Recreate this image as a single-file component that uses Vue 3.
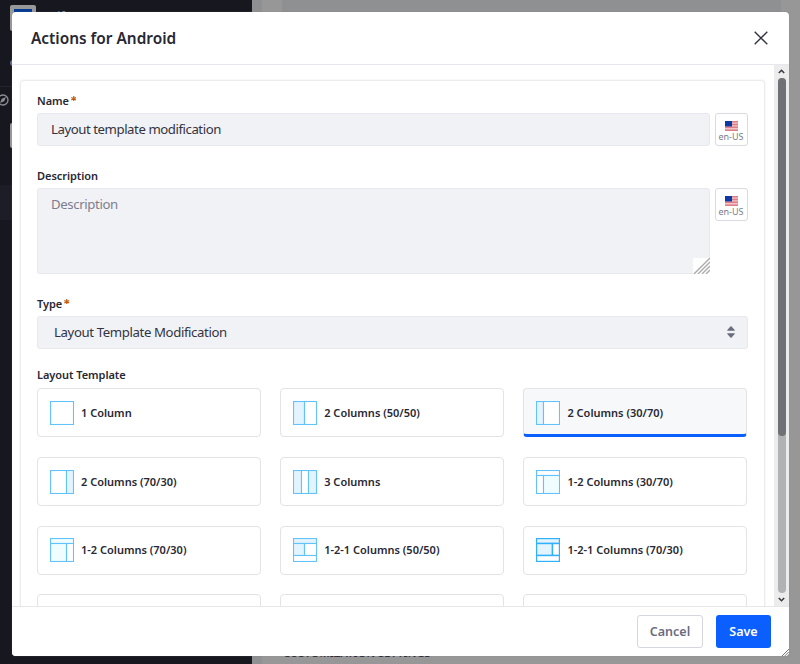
<script setup>
const B = '#e3f4ff'
const M = '#effdff'
const W = '#fff'
// Each icon is a list of panes: [x, y, width, height, fill]
const templates = [
  { name: '1 Column', panes: [[0, 0, 23, 23, W]] },
  { name: '2 Columns (50/50)', panes: [[0, 0, 11, 23, B], [11, 0, 12, 23, W]] },
  { name: '2 Columns (30/70)', active: true, panes: [[0, 0, 7, 23, B], [7, 0, 16, 23, W]] },
  { name: '2 Columns (70/30)', panes: [[0, 0, 16, 23, W], [16, 0, 7, 23, B]] },
  { name: '3 Columns', panes: [[0, 0, 8, 23, B], [8, 0, 7, 23, W], [15, 0, 8, 23, B]] },
  { name: '1-2 Columns (30/70)', panes: [[0, 0, 23, 5, W], [0, 5, 7, 18, W], [7, 5, 16, 18, M]] },
  { name: '1-2 Columns (70/30)', panes: [[0, 0, 23, 5, M], [0, 5, 16, 18, M], [16, 5, 7, 18, W]] },
  { name: '1-2-1 Columns (50/50)', panes: [[0, 0, 23, 5, B], [0, 5, 11, 12, B], [11, 5, 12, 12, W], [0, 17, 23, 6, W]] },
  { name: '1-2-1 Columns (70/30)', strong: true, panes: [[0, 0, 23, 5, B], [0, 5, 16, 12, B], [16, 5, 7, 12, W], [0, 17, 23, 6, W]] },
  { name: '', panes: [] },
  { name: '', panes: [] },
  { name: '', panes: [] }
]
</script>

<template>
  <div class="page">
    <div class="sidebar">
      <div class="logo"><i></i></div>
      <div class="site">Liferay</div>
      <div class="dot"></div>
      <div class="rule"></div>
      <svg class="compass" viewBox="0 0 12 12"><circle cx="6" cy="6" r="5" fill="none" stroke="#8f8f93" stroke-width="1.3" /><path d="M9 3 7.2 7.2 3 9 4.8 4.8Z" fill="#8f8f93" /></svg>
      <div class="tab"></div>
      <div class="item"></div>
    </div>
    <div class="strip"></div>
    <div class="gutter"></div>
    <div class="sheet"><span>CUSTOMIZATION SETTINGS</span></div>
    <div class="edge"></div>

    <section class="modal">
      <header>
        <h1>Actions for Android</h1>
        <svg class="close" viewBox="0 0 14 14"><path d="M.7.7 13.3 13.3M13.3.7.7 13.3" stroke="#33343f" stroke-width="1.4" fill="none" /></svg>
      </header>
      <div class="body">
        <div class="scroll">
          <div class="panel">
            <label class="l-name">Name<svg class="req" viewBox="0 0 6 6"><path d="M3 0V6M.3 1.6 5.7 4.4M5.7 1.6.3 4.4" stroke="#c45a14" stroke-width="1.3" /></svg></label>
            <div class="row">
              <div class="control name">Layout template modification</div>
              <div class="locale"><svg viewBox="0 0 13 10"><path fill="#f3c3c5" d="M0 0h13v10H0z" /><path d="M0 .7h13M0 3.5h13M0 6.3h13M0 9.2h13" stroke="#dc7f86" stroke-width="1.4" /><path fill="#0b3aa5" d="M0 0h7v5.6H0z" /></svg><span>en-US</span></div>
            </div>
            <label class="l-desc">Description</label>
            <div class="row">
              <div class="control area"><span>Description</span>
                <svg class="grip" viewBox="0 0 17 16"><path fill="#fff" d="M0 0h17v16H0z" /><path d="M1 16 17 0M5 16 17 4M9 16 17 8M13 16 17 12" stroke="#aaa" stroke-width="1.4" /></svg>
              </div>
              <div class="locale"><svg viewBox="0 0 13 10"><path fill="#f3c3c5" d="M0 0h13v10H0z" /><path d="M0 .7h13M0 3.5h13M0 6.3h13M0 9.2h13" stroke="#dc7f86" stroke-width="1.4" /><path fill="#0b3aa5" d="M0 0h7v5.6H0z" /></svg><span>en-US</span></div>
            </div>
            <label class="l-type">Type<svg class="req" viewBox="0 0 6 6"><path d="M3 0V6M.3 1.6 5.7 4.4M5.7 1.6.3 4.4" stroke="#c45a14" stroke-width="1.3" /></svg></label>
            <div class="control select"><span>Layout Template Modification</span>
              <svg viewBox="0 0 8 12"><path fill="#6b6c7e" d="M.5 4.8Q0 4.6.3 4L3.4.6Q4 0 4.6.6L7.7 4Q8 4.6 7.5 4.8ZM.5 7.2Q0 7.4.3 8L3.4 11.4Q4 12 4.6 11.4L7.7 8Q8 7.4 7.5 7.2Z" /></svg>
            </div>
            <label class="l-layout">Layout Template</label>
            <div class="grid">
              <div v-for="(t, i) in templates" :key="i" class="card" :class="{ active: t.active }">
                <svg v-if="t.name" class="icon" viewBox="0 0 24 24">
                  <rect v-for="(p, j) in t.panes" :key="j" :x="p[0] + 0.5" :y="p[1] + 0.5" :width="p[2]" :height="p[3]" :fill="p[4]" :stroke="t.strong ? '#2fb1fb' : '#62c2fb'" :stroke-width="t.strong ? 1.4 : 1.1" />
                </svg>
                <span>{{ t.name }}</span>
              </div>
            </div>
          </div>
        </div>
        <div class="scrollbar">
          <svg viewBox="0 0 7 5"><path d="M.8 4 3.5 1.3 6.2 4" fill="none" stroke="#3c3c40" stroke-width="1.6" /></svg>
          <div class="track"><div class="thumb"></div></div>
          <svg viewBox="0 0 7 5"><path d="M.8 1 3.5 3.7 6.2 1" fill="none" stroke="#3c3c40" stroke-width="1.6" /></svg>
        </div>
      </div>
      <footer>
        <div class="btn cancel"><span>Cancel</span></div>
        <div class="btn save"><span>Save</span></div>
        <svg class="resize" viewBox="0 0 7 7"><path d="M0 7 7 0M2.7 7 7 2.7M5.2 7 7 5.2" stroke="#77777b" stroke-width="1" /></svg>
      </footer>
    </section>
  </div>
</template>

<style>
body { margin: 0; overflow: hidden; }
</style>
<style scoped>
* { box-sizing: border-box; }
.page { position: relative; display: flex; width: 800px; height: 664px; overflow: hidden; background: #979797; font-family: "Noto Sans", sans-serif; color: #272833; }
svg { display: block; flex: none; }
.sidebar { position: relative; width: 252px; background: #171720; overflow: hidden; }
.logo { position: absolute; left: 10px; top: 5px; width: 26px; height: 26px; border-radius: 2px; background: #999; padding: 4px; }
.logo i { display: block; height: 18px; background: #053a94; }
.site { position: absolute; left: 51px; top: 9px; font-size: 12px; line-height: 16px; color: #8f8f93; }
.dot { position: absolute; left: 10px; top: 60px; width: 6px; height: 6px; border-radius: 50%; background: #626b91; }
.rule { position: absolute; left: 0; top: 86px; width: 20px; height: 1px; background: #24242d; }
.compass { position: absolute; left: -3px; top: 94px; width: 12px; height: 12px; }
.tab { position: absolute; left: 10px; top: 123px; width: 20px; height: 25px; background: #999; border-radius: 2px; }
.item { position: absolute; left: 0; top: 185px; width: 20px; height: 35px; background: #1d1d27; }
.strip { width: 10px; background: #8f9092; }
.gutter { width: 20px; background: #979797; }
.sheet { flex: 1; display: flex; align-items: flex-end; background: linear-gradient(#8f9092 0 300px, #979797 300px); }
.sheet span { width: 150px; height: 16px; margin: 0 0 3px 1px; white-space: nowrap; font-size: 11px; line-height: 16px; font-weight: 600; letter-spacing: .1px; color: #272833; }
.edge { width: 19px; background: #979797; }
.modal { position: absolute; left: 12px; top: 12px; width: 777px; height: 644px; display: flex; flex-direction: column; background: #fff; border-radius: 4px; overflow: hidden; box-shadow: 0 0 1px #777; }
header { display: flex; align-items: center; justify-content: space-between; height: 53px; padding: 0 21px 0 19px; border-bottom: 1px solid #e7e7ed; }
h1 { margin: 1px 0 0; padding-top: 1px; font-size: 15.4px; line-height: 24px; font-weight: 600; white-space: nowrap; }
.close { width: 14px; height: 14px; margin-top: -1px; }
.body { display: flex; height: 541px; }
.scroll { flex: 1; padding: 16px 10px 0 9px; overflow: hidden; }
.panel { height: 700px; padding: 12px 16px 0; background: #fff; border-radius: 3px; box-shadow: 0 0 2px 1px rgba(39, 40, 51, .12); }
label { display: flex; align-items: center; height: 16px; font-size: 11px; line-height: 16px; font-weight: 600; letter-spacing: -.05px; white-space: nowrap; }
.req { width: 5.5px; height: 5.5px; margin: -5px 0 0 2px; }
.row { display: flex; justify-content: space-between; align-items: flex-start; }
.l-name { margin-bottom: 4px; }
.l-desc { margin: 22px 0 4px; }
.l-type { margin: 22px 0 4px; }
.l-layout { margin: 18px 0 5.4px; }
.control { position: relative; width: 673px; background: #f1f2f5; border: 1px solid #e7e7ed; border-radius: 3px; font-size: 13.2px; line-height: 20px; letter-spacing: -.38px; padding: 0 13px; white-space: nowrap; color: #33343f; }
.name { height: 33px; line-height: 31px; letter-spacing: -.44px; }
.area { height: 86px; padding-top: 5px; color: #7d7e8f; }
.grip { position: absolute; right: -1px; bottom: -1px; width: 17px; height: 16px; }
.select { display: flex; align-items: center; justify-content: space-between; width: 711px; height: 33px; padding: 0 12px 0 16px; }
.select span { padding-bottom: 1px; }
.select svg { width: 8px; height: 12px; margin-top: -1px; }
.locale { display: flex; flex-direction: column; align-items: center; width: 33px; height: 33px; padding: 7px 1px 0 0; border: 1px solid #d9dae3; border-radius: 3px; font-size: 9px; line-height: 11px; color: #7b7c8c; white-space: nowrap; }
.locale svg { width: 13px; height: 10px; margin-left: 1px; }
.grid { display: grid; grid-template-columns: repeat(3, 1fr); gap: 19.7px; width: 710px; }
.card { display: flex; align-items: center; height: 49px; padding: 0 12px; border: 1px solid #e3e3e6; border-radius: 4px; font-size: 11px; line-height: 16px; font-weight: 600; white-space: nowrap; }
.card.active { background: linear-gradient(#f7f8f9 0 0) padding-box; border-bottom: 3px solid #0b5fff; height: 48.5px; padding-top: 3px; }
.icon { width: 24px; height: 24px; margin-right: 7px; }
.scrollbar { display: flex; flex-direction: column; align-items: center; justify-content: space-between; width: 15px; padding: 4px 0; background: #ececed; }
.scrollbar svg { width: 7px; height: 5px; }
.track { width: 8px; height: 515px; border-radius: 4px; background: #b1b2b4; }
.thumb { height: 358px; border-radius: 4px; background: #6e7175; }
footer { position: relative; display: flex; justify-content: flex-end; gap: 13px; height: 50px; padding: 8px 18px 0 0; border-top: 1px solid #e7e7ea; background: #fff; }
.btn { display: flex; align-items: center; justify-content: center; height: 33px; border-radius: 3px; font-size: 12.5px; line-height: 20px; font-weight: 600; }
.cancel { width: 66px; border: 1px solid #d5d6df; color: #6b6c7e; }
.save { width: 55px; background: #0b5fff; color: #fff; }
.resize { position: absolute; right: 0; bottom: 0; width: 7px; height: 7px; }
</style>
